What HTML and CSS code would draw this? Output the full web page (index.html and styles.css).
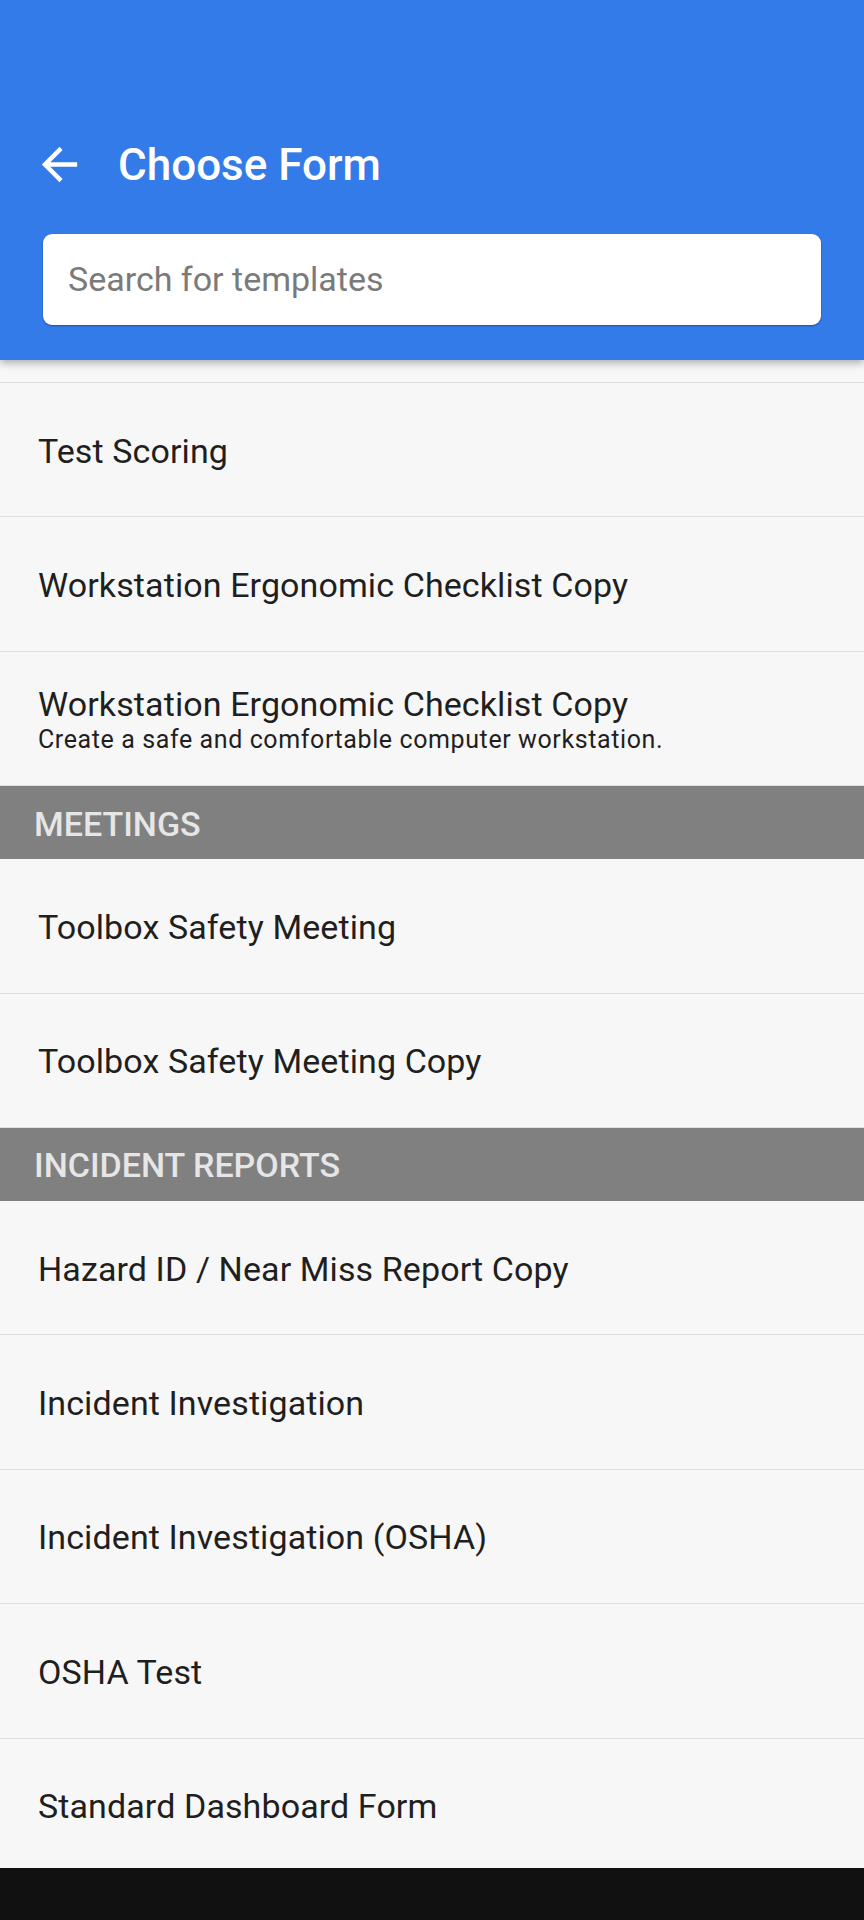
FILE: index.html
```html
<!DOCTYPE html>
<html lang="en">
<head>
    <meta charset="UTF-8">
    <meta name="viewport" content="width=device-width, initial-scale=1.0">
    <title>Choose Form</title>
    <link rel="stylesheet" href="styles.css">
</head>
<body>
    <div class="screen">
        <header class="app-bar">
            <div class="toolbar">
                <button class="back-btn" aria-label="Back">
                    <svg viewBox="0 0 24 24" width="53" height="53">
                        <path fill="#fff" d="M20 11H7.83l5.59-5.59L12 4l-8 8 8 8 1.41-1.41L7.83 13H20v-2z"/>
                    </svg>
                </button>
                <h1 class="title">Choose Form</h1>
            </div>
            <div class="search-wrap">
                <input type="text" class="search" placeholder="Search for templates">
            </div>
        </header>

        <main class="list">
            <div class="item partial"></div>
            <div class="item"><span class="item-title">Test Scoring</span></div>
            <div class="item"><span class="item-title">Workstation Ergonomic Checklist Copy</span></div>
            <div class="item">
                <span class="item-title">Workstation Ergonomic Checklist Copy</span>
                <span class="item-sub">Create a safe and comfortable computer workstation.</span>
            </div>

            <div class="section">MEETINGS</div>
            <div class="item"><span class="item-title">Toolbox Safety Meeting</span></div>
            <div class="item"><span class="item-title">Toolbox Safety Meeting Copy</span></div>

            <div class="section">INCIDENT REPORTS</div>
            <div class="item"><span class="item-title">Hazard ID / Near Miss Report Copy</span></div>
            <div class="item"><span class="item-title">Incident Investigation</span></div>
            <div class="item"><span class="item-title">Incident Investigation (OSHA)</span></div>
            <div class="item"><span class="item-title">OSHA Test</span></div>
            <div class="item"><span class="item-title">Standard Dashboard Form</span></div>
        </main>

        <div class="nav-bar"></div>
    </div>
</body>
</html>
```

FILE: styles.css
```css
* {
    box-sizing: border-box;
}
body {
    margin: 0;
    background: #f7f7f7;
    font-family: Roboto, 'Noto Sans', sans-serif;
}
.screen {
    width: 864px;
    height: 1920px;
    display: flex;
    flex-direction: column;
    overflow: hidden;
    position: relative;
}
.app-bar {
    background: #347bea;
    height: 360px;
    padding-top: 103px;
    box-shadow: 0 3px 8px rgba(0, 0, 0, 0.3);
    position: relative;
    z-index: 2;
    flex-shrink: 0;
}
.toolbar {
    display: flex;
    align-items: center;
    height: 123px;
    padding-left: 33px;
}
.back-btn {
    background: none;
    border: none;
    padding: 0;
    width: 53px;
    height: 53px;
    display: flex;
}
.title {
    margin: 0 0 0 32px;
    color: #fff;
    font-size: 44px;
    font-weight: 500;
}
.search-wrap {
    padding: 8px 43px 0;
}
.search {
    width: 100%;
    height: 91px;
    border: none;
    border-radius: 9px;
    background: #fff;
    box-shadow: 0 1px 2px rgba(0, 0, 0, 0.35);
    padding: 0 25px 2px;
    font-family: Roboto, sans-serif;
    font-size: 34px;
    color: #222;
}
.search::placeholder {
    color: #7a7a7a;
}
.search:focus {
    outline: 0;
}
.list {
    flex: 1;
    overflow: hidden;
}
.item {
    height: 134.4px;
    border-bottom: 1px solid #e0e0e0;
    display: flex;
    flex-direction: column;
    justify-content: center;
    padding: 2px 0 0 38px;
    color: #1f1f1f;
}
.item.partial {
    height: 23px;
    padding: 0;
}
.item-title {
    font-size: 34px;
    letter-spacing: 0.1px;
}
.item-sub {
    font-size: 25px;
    letter-spacing: 0.6px;
    margin-top: 1px;
}
.section {
    height: 73px;
    background: #808080;
    color: #e6e6e6;
    font-size: 34px;
    font-weight: 500;
    display: flex;
    align-items: center;
    padding: 2px 0 0 34px;
}
.nav-bar {
    height: 52px;
    background: #111;
    flex-shrink: 0;
}
```
